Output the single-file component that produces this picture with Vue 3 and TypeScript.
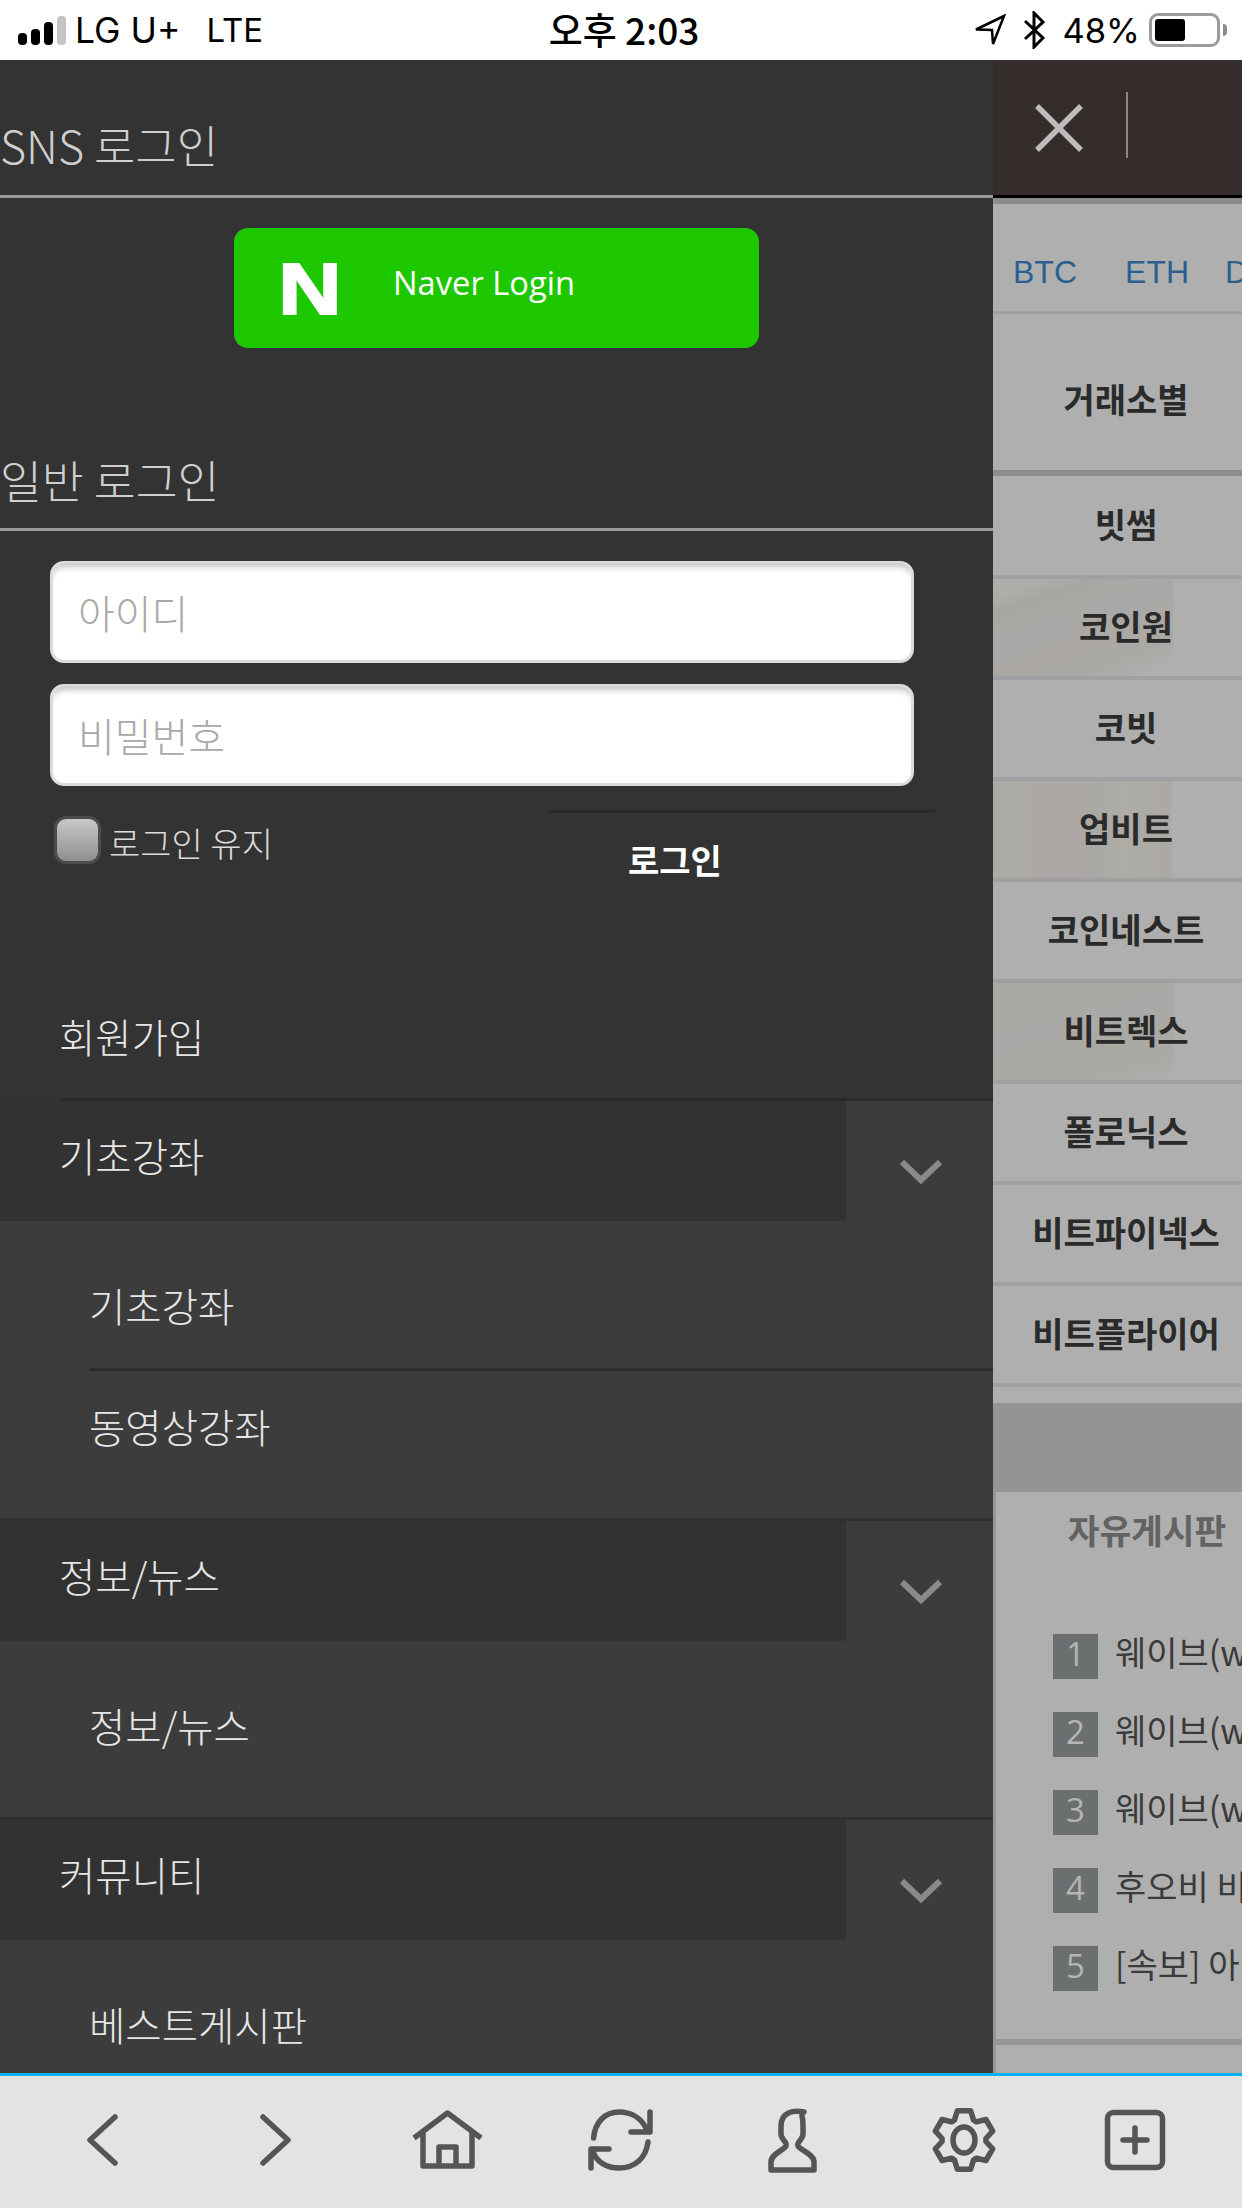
<script setup lang="ts">
interface MenuGroup {
  title: string;
  items: string[];
}

const menu: MenuGroup[] = [
  { title: '기초강좌', items: ['기초강좌', '동영상강좌'] },
  { title: '정보/뉴스', items: ['정보/뉴스'] },
  { title: '커뮤니티', items: ['베스트게시판'] },
];

const exchanges = [
  { name: '빗썸', ghost: '' },
  { name: '코인원', ghost: 'ghost-a' },
  { name: '코빗', ghost: '' },
  { name: '업비트', ghost: 'ghost-b' },
  { name: '코인네스트', ghost: '' },
  { name: '비트렉스', ghost: 'ghost-c' },
  { name: '폴로닉스', ghost: '' },
  { name: '비트파이넥스', ghost: '' },
  { name: '비트플라이어', ghost: '' },
];

const posts = ['웨이브(waves)', '웨이브(waves)', '웨이브(waves)', '후오비 비트코인', '[속보] 아이콘'];

// six-tooth outline for the settings icon
function gearPath(): string {
  const pts: string[] = [];
  for (let i = 0; i < 6; i++) {
    const a = (i * 60 - 90) * (Math.PI / 180);
    const spec: [number, number][] = [[-26, 22], [-13, 30], [13, 30], [26, 22]];
    for (const [off, r] of spec) {
      const t = a + (off * Math.PI) / 180;
      pts.push(`${(37 + Math.cos(t) * r).toFixed(1)} ${(36 + Math.sin(t) * r).toFixed(1)}`);
    }
  }
  return `M${pts.join('L')}Z`;
}
const gear = gearPath();
</script>

<template>
  <div class="screen">
    <header class="status">
      <div class="status-left">
        <span class="signal"><i class="b1" /><i class="b2" /><i class="b3" /><i class="b4" /></span>
        <span class="carrier">LG U+</span>
        <span class="net">LTE</span>
      </div>
      <div class="clock">오후 2:03</div>
      <div class="status-right">
        <svg class="st-loc" width="32" height="32" viewBox="0 0 32 32">
          <path d="M30 2 2 15.5l16 .5 1 14z" fill="none" stroke="#000" stroke-width="2.5" />
        </svg>
        <svg class="st-bt" width="22" height="38" viewBox="0 0 22 38">
          <path d="M2 10 20 27 11 36V2l9 9L2 28" fill="none" stroke="#000" stroke-width="3" />
        </svg>
        <span class="pct">48%</span>
        <span class="battery"><i /></span>
        <span class="nub" />
      </div>
    </header>

    <div class="main">
      <aside class="drawer">
        <h2 class="sec-title">SNS 로그인</h2>
        <a class="naver">
          <span class="naver-n">N</span>
          <span class="naver-label">Naver Login</span>
        </a>

        <h2 class="sec-title sec-title--tall">일반 로그인</h2>
        <div class="fields">
          <input class="field" type="text" placeholder="아이디" />
          <input class="field" type="password" placeholder="비밀번호" />
        </div>
        <div class="login-row">
          <label class="keep"><span class="check" />로그인 유지</label>
          <div class="login-btn">로그인</div>
        </div>

        <div class="join">회원가입</div>
        <section v-for="group in menu" :key="group.title" class="group">
          <div class="group-head">
            <div class="group-title">{{ group.title }}</div>
            <div class="group-toggle">
              <svg width="46" height="30" viewBox="0 0 46 30">
                <path d="M4 5 23 23 42 5" fill="none" stroke="#8a8a8a" stroke-width="6" />
              </svg>
            </div>
          </div>
          <ul class="sub">
            <li v-for="item in group.items" :key="item" class="sub-item"><span>{{ item }}</span></li>
          </ul>
        </section>
      </aside>

      <div class="behind">
        <div class="behind-top">
          <svg width="50" height="50" viewBox="0 0 50 50">
            <path d="M3 3 47 47M47 3 3 47" stroke="#bdbdbd" stroke-width="5.5" />
          </svg>
          <span class="behind-divider" />
        </div>
        <nav class="coins"><span>BTC</span><span>ETH</span><span>DASH</span></nav>
        <div class="ex-head">거래소별</div>
        <ul class="ex-list">
          <li v-for="ex in exchanges" :key="ex.name" class="ex-row" :class="ex.ghost">
            <span>{{ ex.name }}</span>
          </li>
        </ul>
        <div class="band" />
        <div class="board">
          <div class="board-title">자유게시판</div>
          <ol class="posts">
            <li v-for="(post, i) in posts" :key="i" class="post">
              <span class="rank">{{ i + 1 }}</span>
              <span class="post-text">{{ post }}</span>
            </li>
          </ol>
          <div class="board-end" />
        </div>
      </div>
    </div>

    <footer class="toolbar">
      <svg viewBox="0 0 72 72"><path d="M48 13 23 36l25 23" /></svg>
      <svg viewBox="0 0 72 72"><path d="M24 13 49 36 24 59" /></svg>
      <svg viewBox="0 0 72 72">
        <path d="M3 34 36.500 9 70 34" stroke-linecap="butt" />
        <path d="M12 28v34h49V28M28 62V43h17v19" />
      </svg>
      <svg viewBox="0 0 72 72">
        <path d="M10.6 34C12 18 22 8 36 8c12 0 22 6 27 16M67 8v20H48" />
        <path d="M65 38C63 54 52 64 36 64c-12 0-22-6-25.4-15M8 64V45h18" />
      </svg>
      <svg viewBox="0 0 72 72">
        <path d="M49 8C38 6 26 8 26 22v8c0 6 7 8 5 12-2 4-15 8-15 16v8h43v-8c0-8-14-12-16-16-2-4 5-6 5-12v-8c0-6-1-10-1-10" />
      </svg>
      <svg viewBox="0 0 72 72">
        <path :d="gear" />
        <ellipse cx="37" cy="36" rx="11" ry="13" />
      </svg>
      <svg viewBox="0 0 72 72">
        <rect x="8.5" y="8.5" width="55" height="55" rx="6" />
        <path d="M36 24v24M24 36h24" />
      </svg>
    </footer>
  </div>
</template>

<style scoped>
.screen {
  width: 1242px;
  height: 2208px;
  display: flex;
  flex-direction: column;
  overflow: hidden;
  font-family: 'Noto Sans CJK KR', 'Liberation Sans', sans-serif;
}

.status {
  height: 60px;
  flex: none;
  box-sizing: border-box;
  display: grid;
  grid-template-columns: 1fr auto 1fr;
  align-items: center;
  padding: 0 15px 0 18px;
  background: #fff;
  color: #000;
  font-family: Inter, 'Noto Sans CJK KR', sans-serif;
  font-size: 34.5px;
}

.status-left {
  display: flex;
  align-items: center;
}

.signal {
  display: flex;
  align-items: flex-end;
  gap: 4px;
  height: 30px;
  margin-right: 9px;
}

.signal i {
  width: 9px;
  border-radius: 4px;
  background: #000;
}

.b1 { height: 12px; }
.b2 { height: 16px; }
.b3 { height: 23px; }
.signal .b4 { height: 29px; background: #c4c4c4; }

.carrier {
  font-size: 35.5px;
}

.net {
  margin-left: 26px;
  font-size: 33px;
}

.clock {
  margin: -3px 0 0 3px;
  font-family: 'Noto Sans CJK KR', sans-serif;
  font-size: 37px;
  font-weight: 500;
}

.status-right {
  display: flex;
  align-items: center;
  justify-content: flex-end;
}

.st-bt {
  margin-left: 17px;
}

.pct {
  margin-left: 17px;
}

.battery {
  box-sizing: border-box;
  width: 71px;
  height: 34px;
  margin-left: 9px;
  padding: 3px;
  border: 3px solid #9b9b9b;
  border-radius: 9px;
}

.battery i {
  display: block;
  width: 30px;
  height: 22px;
  border-radius: 3px;
  background: #000;
}

.nub {
  width: 4px;
  height: 12px;
  margin-left: 3px;
  border-radius: 0 4px 4px 0;
  background: #8c8c8c;
}

.main {
  flex: 1;
  min-height: 0;
  display: flex;
  overflow: hidden;
}

.drawer {
  flex: none;
  width: 993px;
  overflow: hidden;
  background: #333;
  color: #e6e6e6;
}

.sec-title {
  height: 135px;
  margin: 0;
  display: flex;
  align-items: flex-end;
  border-bottom: 3px solid #9a9a9a;
  font-size: 45px;
  font-weight: 300;
  line-height: 100px;
  color: #cfcfcf;
}

.sec-title--tall {
  height: 180px;
  font-size: 45.5px;
  line-height: 97px;
}

.naver {
  width: 525px;
  height: 120px;
  margin: 30px 0 0 234px;
  display: flex;
  border-radius: 14px;
  background: #1ec800;
  color: #fff;
}

.naver-n {
  width: 58px;
  margin: 35px 0 0 47px;
  height: 52px;
  font-family: 'Liberation Sans', sans-serif;
  font-size: 73px;
  font-weight: 700;
  line-height: 52px;
  text-align: center;
  transform: scaleX(1.2);
  -webkit-text-stroke: 2px #fff;
}

.naver-label {
  margin: 33px 0 0 54px;
  font-family: 'Open Sans', sans-serif;
  font-size: 32.7px;
  line-height: 44px;
}

.fields {
  display: flex;
  flex-direction: column;
  gap: 21px;
  padding: 30px 0 0 50px;
}

.field {
  box-sizing: border-box;
  width: 864px;
  height: 102px;
  padding: 0 25px;
  border: 3px solid #dcdcdc;
  border-top-width: 2px;
  border-radius: 14px;
  outline: none;
  background: #fff;
  box-shadow: inset 0 8px 6px -4px #c4c4c4;
  font-family: inherit;
  font-size: 40px;
  font-weight: 300;
}

.field::placeholder {
  color: #a8a8a8;
  opacity: 1;
}

.login-row {
  display: flex;
  height: 166px;
  margin-top: 24px;
}

.keep {
  width: 547px;
  box-sizing: border-box;
  padding: 6px 0 0 54px;
  display: flex;
  align-items: flex-start;
  font-size: 34px;
  font-weight: 300;
  line-height: 54px;
  color: #dcdcdc;
}

.check {
  box-sizing: border-box;
  width: 47px;
  height: 48px;
  margin-right: 8px;
  border: 3px solid #4c4c4c;
  border-radius: 12px;
  background: linear-gradient(#c8c8c8, #8f8f8f);
}

.login-btn {
  width: 388px;
  height: 76px;
  border-top: 3px solid #2a2a2a;
  text-indent: 81px;
  font-size: 34px;
  font-weight: 700;
  line-height: 94px;
  color: #fff;
}

.join {
  height: 122px;
  margin-left: 59px;
  padding-left: 0;
  border-bottom: 3px solid #2a2a2a;
  font-size: 39.5px;
  font-weight: 300;
  line-height: 119px;
}

.group-head {
  height: 120px;
  display: flex;
  background: #3c3c3c;
}

.group-title {
  width: 846px;
  padding: 0 0 14px 59px;
  box-sizing: border-box;
  display: flex;
  align-items: center;
  background: #323232;
  font-size: 39.5px;
  font-weight: 300;
}

.group-toggle {
  flex: 1;
  display: flex;
  justify-content: center;
  padding: 56px 0 0 3px;
}

.sub {
  margin: 0;
  padding: 26px 0 29px 89px;
  list-style: none;
  background: #3c3c3c;
  border-bottom: 3px solid #2e2e2e;
}

.sub-item {
  box-sizing: border-box;
  height: 121px;
  padding-bottom: 6px;
  display: flex;
  align-items: center;
  font-size: 39.5px;
  font-weight: 300;
}

.sub-item + .sub-item {
  height: 121px;
  padding-bottom: 10px;
  border-top: 3px solid #2e2e2e;
}

.behind {
  flex: 1;
  min-width: 0;
  overflow: hidden;
  background: #afafaf;
}

.behind-top {
  height: 135px;
  display: flex;
  align-items: center;
  padding-left: 41px;
  border-bottom: 3px solid #000;
  background: #352d2b;
}

.behind-divider {
  width: 2px;
  height: 66px;
  margin-left: 42px;
  margin-top: -6px;
  background: #8e8685;
}

.coins {
  height: 77px;
  display: flex;
  align-items: center;
  padding: 30px 0 0 20px;
  border-top: 6px solid #8c8c8c;
  border-bottom: 3px solid #a0a0a0;
  white-space: nowrap;
  font-family: 'Liberation Sans', sans-serif;
  font-size: 32px;
  color: #2c5f8f;
}

.coins span:nth-child(1) {
  flex: none;
  width: 112px;
}

.coins span:nth-child(2) {
  flex: none;
  width: 100px;
}

.ex-head,
.ex-row {
  width: 266px;
  display: flex;
  align-items: center;
  justify-content: center;
  white-space: nowrap;
  font-size: 34px;
  font-weight: 700;
  color: #2a2a2a;
}

.ex-head {
  height: 144px;
  padding-top: 12px;
  border-bottom: 6px solid #8e8e8e;
}

.ex-list {
  margin: 0;
  padding: 0;
  list-style: none;
}

.ex-row {
  position: relative;
  height: 92px;
  padding-bottom: 5px;
  border-bottom: 4px solid #a0a0a0;
}

.ex-row:first-child {
  height: 94px;
}

.ex-row span {
  position: relative;
}

.ex-row.ghost-a::before,
.ex-row.ghost-b::before,
.ex-row.ghost-c::before {
  content: '';
  position: absolute;
  inset: 0 86px 0 0;
}

.ex-row.ghost-a::before {
  background: linear-gradient(160deg, #aeada9 0 12%, #a6a6a3 22%, #a9a9a6 34%, #a8a8a8 44%, #aca9a5 58%, #aba9a5 78%, #afafaf 92%);
}

.ex-row.ghost-b::before {
  background: linear-gradient(90deg, #abaaa5 0 20%, #ada7a6 26% 48%, #a9a8a5 56%, #adaca6 70%, #aca9a5 98%, #afafaf);
}

.ex-row.ghost-c::before {
  background: linear-gradient(165deg, #aaa9a4 0 30%, #aaa9a9 42%, #aba9a3 60%, #aba9a4 82%, #afafaf);
}

.band {
  height: 89px;
  margin-top: 16px;
  background: #949494;
}

.board {
  height: 583px;
  border-left: 3px solid #979797;
}

.board-title {
  width: 302px;
  height: 80px;
  text-align: center;
  font-size: 34.5px;
  font-weight: 700;
  line-height: 75px;
  color: #636363;
}

.posts {
  display: flex;
  flex-direction: column;
  gap: 33px;
  margin: 0;
  padding: 62px 0 0 57px;
  list-style: none;
}

.post {
  display: flex;
  align-items: flex-start;
  height: 45px;
  white-space: nowrap;
}

.rank {
  flex: none;
  width: 45px;
  height: 45px;
  margin-right: 17px;
  background: #6b6f70;
  font-family: 'Open Sans', sans-serif;
  font-size: 33px;
  line-height: 40px;
  text-align: center;
  color: #b5b5b5;
}

.post-text {
  font-size: 34px;
  font-weight: 400;
  line-height: 36px;
  color: #3a3a3a;
}

.board-end {
  height: 6px;
  margin-top: 48px;
  background: #979797;
}

.toolbar {
  flex: none;
  box-sizing: border-box;
  height: 135px;
  display: flex;
  align-items: center;
  padding: 0 17px 4px;
  border-top: 3px solid #00b4f0;
  background: #e3e3e3;
}

.toolbar svg {
  flex: none;
  width: 72px;
  height: 72px;
  margin: 0 50px;
  fill: none;
  stroke: #555;
  stroke-width: 5.5;
  stroke-linecap: round;
  stroke-linejoin: round;
}
</style>

<style>
html,
body {
  margin: 0;
  background: #333;
}
</style>
